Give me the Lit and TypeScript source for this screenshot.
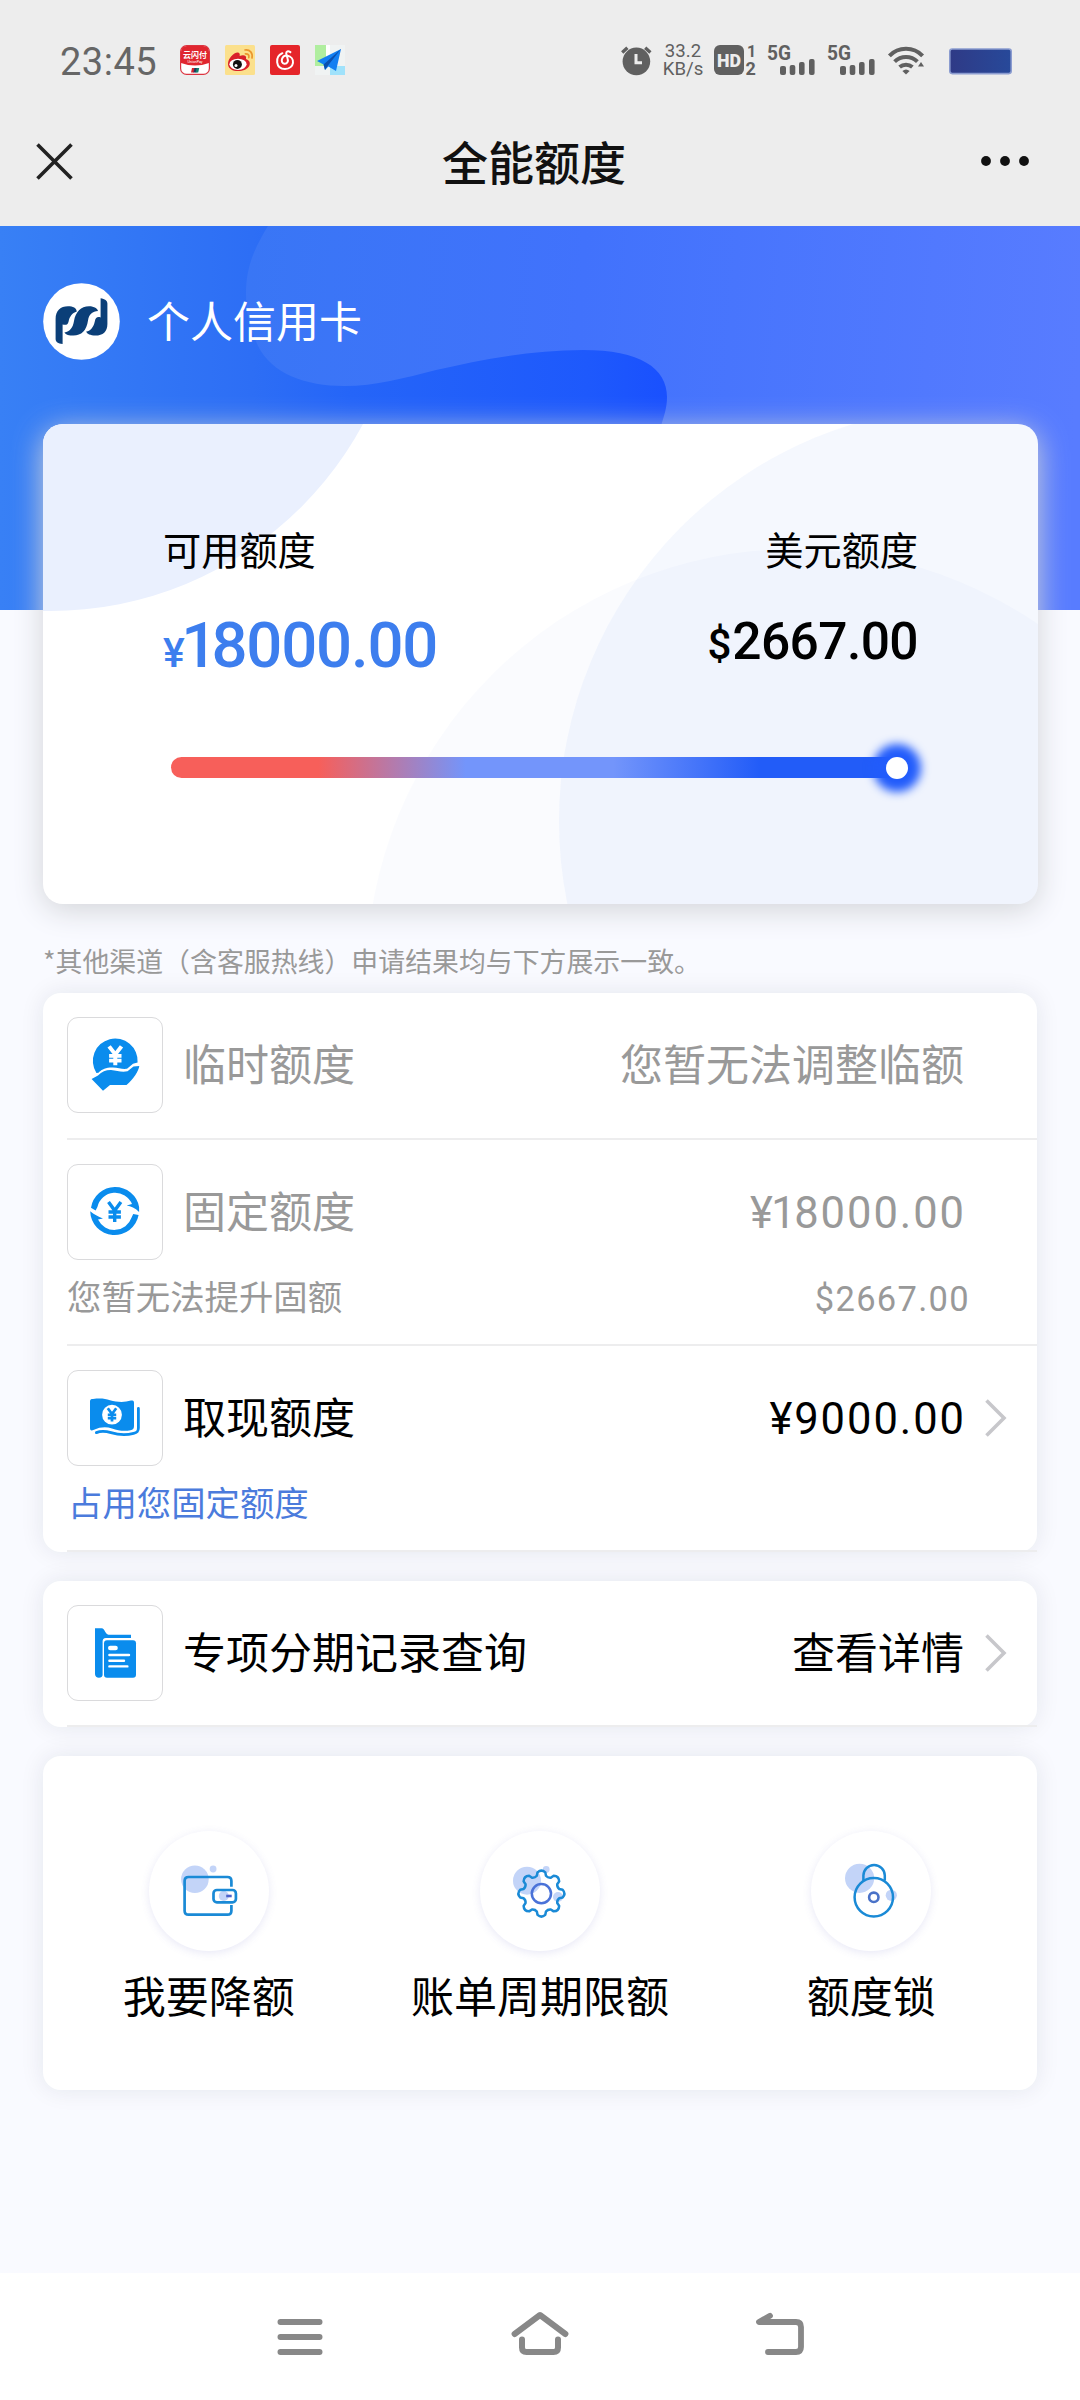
import { LitElement, html, css, svg, TemplateResult } from "lit";
import { customElement, property } from "lit/decorators.js";

const YEN = svg`<path d="M-6.2 -10 L0 -1.5 L6.2 -10 M0 -1.5 V10 M-6.2 0 H6.2 M-6.2 5 H6.2" fill="none" stroke="currentColor"/>`;

const gearPath = (cx: number, cy: number, outer: number, inner: number): string => {
  const teeth = 8;
  const pts: string[] = [];
  const at = (r: number, a: number) =>
    `${(cx + r * Math.cos(a)).toFixed(2)} ${(cy + r * Math.sin(a)).toFixed(2)}`;
  const step = (Math.PI * 2) / teeth;
  for (let i = 0; i < teeth; i++) {
    const a = i * step;
    pts.push(`${i ? "L" : "M"}${at(inner, a - step * 0.32)}`);
    pts.push(`L${at(outer - 1.6, a - step * 0.23)}`);
    pts.push(`Q${at(outer + 1.6, a)} ${at(outer - 1.6, a + step * 0.23)}`);
    pts.push(`L${at(inner, a + step * 0.32)}`);
    pts.push(`Q${at(inner - 1.6, a + step * 0.5)} ${at(inner, a + step * 0.68)}`);
  }
  return pts.join(" ") + "Z";
};

const icons: Record<string, TemplateResult> = {
  hand: svg`
    <path fill="#0a8ced" d="M29.4 56 A22.4 22.4 0 1 1 70.6 45.5 L66 46.8 L60 51.8 C54 52.6 50 49.6 43 50.6 C37 51.4 34 53.2 31.5 55.8 Z"/>
    <path fill="#0a8ced" d="M24.6 62 L31 58.4 C35 54.6 39 52.9 44 53 C50 53.4 54 55.6 60.5 54.3 L66.5 49.4 L72.3 49 C71.6 54 66.5 62 59.5 68 H43 L36 73.8 Z"/>
    <g transform="translate(48.3 38.8) scale(1 .95)" color="#fff" stroke-width="4">${YEN}</g>`,
  cycle: svg`
    <path fill="#0a8ced" d="M24 43.7 A24.4 24.4 0 0 1 72.1 43 V48 C68 44 64 42.6 59.6 41.6 L65 40 A18.2 18.2 0 0 0 30.4 43 L28.6 46.4 Z"/>
    <path fill="#0a8ced" d="M71.6 51 A24.4 24.4 0 0 1 23.2 47.2 C27 50.4 31 52.6 36 54.4 L31 55.6 A18.2 18.2 0 0 0 64.6 53.6 L66.2 50 Z"/>
    <g transform="translate(47.7 48)" color="#0a8ced" stroke-width="3.4">${YEN}</g>`,
  cash: svg`
    <path fill="#0a8ced" d="M23 31.5 C23 29.6 24 29 26 29 C34 28 38 28.8 43 30.2 C50 32.2 57 32.6 64 30.6 C66.4 30 67 30.8 67 33 V56 C67 58.6 66 59.8 63.4 60.2 C57 61.4 51 60.4 45 58.4 C39 56.6 33 57 27 59.8 C24 61 23 60.4 23 58 Z"/>
    <path fill="none" stroke="#0a8ced" stroke-width="2.8" stroke-linecap="round" d="M71.4 38.5 V58 C71.4 61.6 70 62.6 66.6 63.4 C58 65.6 50.5 64.6 44 62.6 C38 60.8 33.4 60.8 29.4 62.6"/>
    <circle cx="45" cy="44.7" r="9.9" fill="#fff"/>
    <g transform="translate(45 44.9) scale(.68 .66)" color="#0a8ced" stroke-width="4">${YEN}</g>`,
  file: svg`
    <path fill="#0a8ced" d="M28 23.3 H34.6 C38 23.4 38 29.5 41.5 29.7 H64 V33 H39 C36.4 33.2 35.6 34.4 35.6 36.6 V70 C35.6 71.6 34 72.7 32 72.7 C29.6 72.7 28 71.2 28 69 Z"/>
    <rect x="37" y="35.2" width="32" height="37.5" rx="3" fill="#0a8ced"/>
    <path stroke="#fff" fill="none" stroke-linecap="round" stroke-width="4.4" d="M43.2 43 H48.6"/>
    <path stroke="#fff" fill="none" stroke-linecap="round" stroke-width="2.4" d="M42.4 50 H62 M42.4 55.8 H57 M42.4 61.4 H60.4"/>`,
  wallet: svg`
    <circle cx="45.9" cy="48.3" r="13.8" fill="#c3d4f8"/>
    <circle cx="64.1" cy="38" r="3.4" fill="#c3d4f8"/>
    <path fill="none" stroke="#1a8ad6" stroke-width="2.7" d="M82.4 55.7 V50 Q82.4 46 78.4 46 H39.6 Q35.6 46 35.6 50 V79.7 Q35.6 83.7 39.6 83.7 H78.4 Q82.4 83.7 82.4 79.7 V74"/>
    <circle cx="74.8" cy="65" r="5" fill="#c3d4f8"/>
    <rect x="64.5" y="59" width="22.4" height="12.4" rx="3.4" fill="none" stroke="#1a8ad6" stroke-width="2.7"/>
    <path d="M77.2 65 H82.7" stroke="#4b62cc" stroke-width="2.6"/>`,
  gear: svg`
    <circle cx="47" cy="49.7" r="14" fill="#c3d4f8"/>
    <circle cx="66.2" cy="38.4" r="3.4" fill="#c3d4f8"/>
    <circle cx="78" cy="66" r="5" fill="#c3d4f8"/>
    <path d=${gearPath(61.4, 62.6, 23.2, 18.4)} fill="none" stroke="#1a8ad6" stroke-width="2.5" stroke-linejoin="round"/>
    <circle cx="61.4" cy="62.6" r="9.6" fill="none" stroke="#4a72d8" stroke-width="2.5"/>`,
  lock: svg`
    <circle cx="48.6" cy="47.3" r="14.6" fill="#c3d4f8"/>
    <circle cx="80.3" cy="64.3" r="5.6" fill="#c3d4f8"/>
    <path fill="none" stroke="#1a8ad6" stroke-width="2.5" d="M52.4 49.6 V44.6 A10.7 10.7 0 0 1 73.8 44.6 V49.6"/>
    <circle cx="62.8" cy="66.3" r="19.2" fill="none" stroke="#1a8ad6" stroke-width="2.5"/>
    <circle cx="62.8" cy="66.3" r="4.7" fill="none" stroke="#4a72c8" stroke-width="2.6"/>`,
};

@customElement("status-bar")
export class StatusBar extends LitElement {
  static styles = css`
    :host { display: flex; height: 96px; align-items: flex-start; padding: 45px 68px 0 60px; box-sizing: border-box; color: #606060; font-family: Roboto, sans-serif; }
    .time { font-size: 38px; line-height: 30px; width: 120px; color: #666; letter-spacing: .5px; padding-top: 2px; box-sizing: border-box; height: 30px; }
    .apps { display: flex; gap: 15px; }
    svg { display: block; overflow: visible; flex: none; }
    .sys { display: flex; margin-left: auto; }
    .net { display: flex; flex-direction: column; align-items: center; width: 38px; margin: -3px 12px 0 12px; font-size: 18.6px; line-height: 18px; white-space: nowrap; }
    .hd { margin-right: 10px; }
    .sig { margin-right: 9px; }
    .wifi { margin: 0 24px 0 1px; }
  `;
  private signal() {
    return svg`<text x="0" y="14.8" font-family="Roboto" font-weight="700" font-size="20.5" fill="#606060" textLength="24" lengthAdjust="spacingAndGlyphs">5G</text>
      <g fill="#606060"><rect x="13" y="21" width="6" height="9" rx="2"/><rect x="22.7" y="20" width="5.6" height="10" rx="2"/><rect x="32" y="17" width="5.6" height="13" rx="2"/><rect x="42" y="14" width="5.6" height="16" rx="2"/></g>`;
  }
  render() {
    return html`
      <div class="time">23:45</div>
      <div class="apps">
        <svg width="30" height="30" viewBox="0 0 30 30">
          <rect x=".6" y=".6" width="28.8" height="28.8" rx="6" fill="#fff" stroke="#dc3440" stroke-width="1.2"/>
          <path d="M1 18 V7 Q1 1 7 1 H23 Q29 1 29 7 V18 Q15 23 1 18Z" fill="#e0262f"/>
          <text x="15" y="13" font-size="8" font-family="Noto Sans CJK SC" font-weight="700" fill="#fff" text-anchor="middle">云闪付</text>
          <text x="15" y="18.2" font-size="3.6" font-family="Roboto" fill="#fff" text-anchor="middle">UnionPay</text>
          <path d="M12 23 h3 l-1 4.6 h-3z" fill="#d8232e"/><path d="M14.4 23 h3 l-1 4.6 h-3z" fill="#1b3a5e"/><path d="M16.6 23 h2.6 l-1 4.6 h-2.6z" fill="#12806e"/>
        </svg>
        <svg width="30" height="30" viewBox="0 0 30 30">
          <rect width="30" height="30" rx="1.5" fill="#fbe08c"/>
          <path d="M3 19 C3 13 9 7 13 7.4 C15 7.6 15 10 14.6 11 C18 9.6 22 10 21 14 C24 15 25.4 17 24.6 20 C23 25 16 26.6 11 26 C6 25.4 3 22.6 3 19Z" fill="#d9202a"/>
          <ellipse cx="13" cy="19.3" rx="8.6" ry="5.6" fill="#fff"/>
          <circle cx="12.4" cy="19.4" r="4.5" fill="#111"/><circle cx="11" cy="20.4" r="1.5" fill="#fff"/>
          <path d="M20 5 C25 4.4 28 8 27 13 M20.4 8.8 C23 8.6 24.4 10 23.8 12.6" fill="none" stroke="#eb962c" stroke-width="1.7" stroke-linecap="round"/>
        </svg>
        <svg width="30" height="30" viewBox="0 0 30 30">
          <rect width="30" height="30" rx="2" fill="#e5252a"/>
          <path d="M12.4 8.2 C4.6 11.6 5.4 24 15 24 C24.6 23.6 26 12.4 17 10.6 C11.6 10.4 9.8 18 14.4 18.8 C17.6 19 18.4 16 17.6 13.6 L16.2 8.6 C16 6.4 18 5.6 20.4 7.2" fill="none" stroke="#fff" stroke-width="2" stroke-linecap="round"/>
        </svg>
        <svg width="30" height="30" viewBox="0 0 30 30">
          <rect width="30" height="30" fill="#f0f3f3"/><rect width="11" height="21" fill="#b0ee9f"/><rect x="15" y="21" width="15" height="9" fill="#a0e2fb"/><path d="M11 0 H15 V21 H11Z" fill="#fff"/>
          <path d="M26 4 L2 16 L8.6 19.4 L10 25 L13.4 21.6 L21 26 Z" fill="#127ff2"/>
          <path d="M26 4 L8.6 19.4 L10 25 L13 20.6 Z" fill="#0b4fae"/>
        </svg>
      </div>
      <div class="sys">
        <svg width="31" height="30" viewBox="0 0 31 30">
          <circle cx="15.4" cy="16.4" r="13.8" fill="#606060"/>
          <path d="M1.2 7.4 L6.4 2.8 M29.4 7.4 L24.2 2.8" stroke="#606060" stroke-width="3.4"/>
          <path d="M15 9 V17.8 H21" fill="none" stroke="#ededed" stroke-width="3"/>
        </svg>
        <div class="net"><span>33.2</span><span>KB/s</span></div>
        <svg class="hd" width="43" height="30" viewBox="0 0 43 30">
          <rect width="30" height="30" rx="6" fill="#606060"/>
          <text x="15" y="22" text-anchor="middle" font-family="Roboto" font-weight="900" font-size="19" fill="#ededed" textLength="24" lengthAdjust="spacingAndGlyphs">HD</text>
          <text x="33" y="12.4" font-family="Roboto" font-weight="700" font-size="16" fill="#606060">1</text>
          <text x="31.6" y="30" font-family="Roboto" font-weight="700" font-size="18" fill="#606060">2</text>
        </svg>
        <svg width="51" height="30" viewBox="0 0 51 30" class="sig">${this.signal()}</svg>
        <svg width="51" height="30" viewBox="0 0 51 30" class="sig">${this.signal()}</svg>
        <svg class="wifi" width="37" height="30" viewBox="0 0 37 30">
          <g fill="none" stroke="#606060" stroke-width="4"><path d="M1.4 10.8 A23 23 0 0 1 34.6 10.8"/><path d="M6.6 16.6 A16.4 16.4 0 0 1 29.4 16.6"/><path d="M11.6 22 A10 10 0 0 1 24.4 22"/></g>
          <path d="M14.4 26 Q18 23 21.6 26 L18 29.6Z" fill="#606060"/><path d="M30 21.6 L33 17 L36 21.6Z" fill="#606060"/>
        </svg>
        <svg width="63" height="30" viewBox="0 0 63 30">
          <defs><linearGradient id="b"><stop stop-color="#2f3a86"/><stop offset="1" stop-color="#27499a"/></linearGradient></defs>
          <rect x=".8" y="4" width="61.4" height="24.6" rx="2.5" fill="url(#b)" stroke="#8b9cd0" stroke-width="1.6"/>
        </svg>
      </div>`;
  }
}

@customElement("limit-row")
export class LimitRow extends LitElement {
  @property() icon = "";
  @property() name = "";
  @property() value = "";
  @property() note = "";
  @property() noteValue = "";
  @property({ type: Boolean }) muted = false;
  @property({ type: Boolean }) arrow = false;
  @property({ type: Boolean }) numeric = false;
  static styles = css`
    :host { display: block; margin-left: 24px; padding-top: 24px; border-bottom: 2px solid #ededee; font-family: "Noto Sans CJK SC", sans-serif; color: #000; }
    .line { display: flex; align-items: center; height: 96px; padding: 0 73px 0 0; margin-bottom: 24px; }
    .line.arrow { padding-right: 29px; }
    .line.noted { margin-bottom: 0; }
    .box { width: 96px; height: 96px; box-sizing: border-box; border: 1px solid #dadadc; border-radius: 11px; margin-right: 20px; flex: none; }
    .box svg { display: block; margin: -1px; }
    .name, .value { font-size: 43px; line-height: 60px; padding-bottom: 7px; white-space: nowrap; }
    .value { margin-left: auto; }
    .numeric { font-family: Roboto, sans-serif; font-size: 43.5px; letter-spacing: 1.95px; margin-right: -2px; padding: 4px 0 0; }
    .tight { letter-spacing: -1.6px; }
    .muted { color: #999; }
    .chev { margin-left: 19px; display: block; }
    .note { display: flex; justify-content: space-between; height: 84px; font-size: 34.4px; line-height: 71px; color: #999; padding-right: 67px; }
    .note.link { color: #4b7bdc; padding-left: 1px; }
    .nv { font-family: Roboto, sans-serif; letter-spacing: 1.3px; line-height: 78px; font-size: 34.5px; }
  `;
  private amount(text: string) {
    // The figure one is narrow, so the pair before the next digit is set tighter.
    return text.startsWith("¥1") ? html`<span class="tight">¥1</span>${text.slice(2)}` : text;
  }
  render() {
    return html`
      <div class="line ${this.arrow ? "arrow" : ""} ${this.note ? "noted" : ""} ${this.muted ? "muted" : ""}">
        <div class="box"><svg width="96" height="96" viewBox="0 0 96 96">${icons[this.icon]}</svg></div>
        <span class="name">${this.name}</span>
        <span class="value ${this.numeric ? "numeric" : ""}">${this.amount(this.value)}</span>
        ${this.arrow
          ? html`<svg class="chev" width="25" height="42" viewBox="0 0 25 42"><path d="M3.5 3.5 L21 21 L3.5 38.5" fill="none" stroke="#c7c7cb" stroke-width="3.6"/></svg>`
          : ""}
      </div>
      ${this.note
        ? html`<div class="note ${this.muted ? "" : "link"}"><span>${this.note}</span><span class="nv">${this.noteValue}</span></div>`
        : ""}`;
  }
}

@customElement("app-root")
export class AppRoot extends LitElement {
  static styles = css`
    :host { display: block; width: 1080px; height: 2400px; background: #f9faff; font-family: "Noto Sans CJK SC", sans-serif; color: #000; overflow: hidden; }
    .page { display: flex; flex-direction: column; height: 2400px; }
    .top { background: #ededed; height: 226px; flex: none; }
    .nav { display: grid; grid-template-columns: 1fr auto 1fr; align-items: center; height: 130px; padding: 0 51px 0 34px; }
    .nav svg { display: block; }
    .nav .more { justify-self: end; }
    .title { font-size: 46px; line-height: 66px; font-weight: 500; color: #111; padding: 0 0 3px 5px; }
    .hero { position: relative; height: 384px; flex: none; }
    .wave { position: absolute; inset: 0; display: block; }
    .user { position: relative; display: flex; align-items: center; padding: 57px 0 0 43px; color: #fff; font-size: 43px; line-height: 60px; }
    .user svg { display: block; margin-right: 27px; }
    .user span { padding-bottom: 6px; }
    .card { position: relative; height: 480px; margin: -186px 42.5px 0 43px; flex: none; border-radius: 20px; background: #fff; box-shadow: 0 6px 30px #d2d4d8; }
    .shapes { position: absolute; inset: 0; display: block; border-radius: 20px; width: 100%; height: 100%; }
    .inner { position: relative; padding: 98px 119.5px 0 120px; }
    .amounts { display: flex; justify-content: space-between; }
    .amount { display: flex; flex-direction: column; }
    .amount.right { align-items: flex-end; }
    .label { font-size: 38.2px; line-height: 53px; height: 83px; }
    .money { font-family: Roboto, sans-serif; font-weight: 500; white-space: nowrap; height: 80px; line-height: 80px; }
    .blue { color: #3d7eee; font-size: 63.5px; letter-spacing: -1.2px; line-height: 82px; }
    .blue .one { letter-spacing: -6px; }
    .black { font-size: 51.5px; line-height: 74px; letter-spacing: -.6px; }
    .blue small { font-size: 41px; letter-spacing: -3.5px; }
    .black small { font-size: 42px; letter-spacing: 1px; }
    .track { display: flex; justify-content: flex-end; align-items: center; height: 21px; width: 737px; margin: 72px 0 0 8px; border-radius: 11px; background: linear-gradient(90deg, #f75f5a 20%, #7395fb 40%, #7395fb 60%, #225cf8 80%); }
    .knob { width: 22px; height: 22px; border-radius: 50%; background: #fff; box-shadow: 0 0 10px 13px #225cfb; flex: none; }
    .tip { font-size: 26.9px; line-height: 40px; color: #999; margin: 0; padding: 37px 0 0 43px; height: 89px; box-sizing: border-box; flex: none; }
    .panel { background: #fff; border-radius: 18px; margin: 0 43px 29px; flex: none; box-shadow: 0 0 24px rgba(20, 30, 50, .09); }
    .panel limit-row.first { padding-bottom: 1px; }
    .actions { display: grid; grid-template-columns: repeat(3, 1fr); height: 334px; box-sizing: border-box; padding-top: 75px; }
    .action { display: flex; flex-direction: column; align-items: center; font-size: 43px; line-height: 60px; white-space: nowrap; }
    .disc { width: 120px; height: 120px; border-radius: 50%; box-shadow: 0 2px 8px rgba(90, 90, 190, .14); margin-bottom: 13px; }
    .disc svg { display: block; }
    .sysnav { display: flex; justify-content: center; align-items: flex-start; gap: 180px; background: #fff; height: 127px; margin-top: auto; flex: none; padding-top: 34px; box-sizing: border-box; }
    .sysnav svg { display: block; }
  `;

  render() {
    return html`
      <div class="page">
        <header class="top">
          <status-bar></status-bar>
          <div class="nav">
            <svg width="41" height="41" viewBox="0 0 41 41"><path d="M3.5 3.5 L37.5 37.5 M37.5 3.5 L3.5 37.5" stroke="#222" stroke-width="3.6"/></svg>
            <div class="title">全能额度</div>
            <svg class="more" width="48" height="10" viewBox="0 0 48 10" fill="#111"><circle cx="5" cy="5" r="4.9"/><circle cx="24" cy="5" r="4.9"/><circle cx="43" cy="5" r="4.9"/></svg>
          </div>
        </header>

        <section class="hero">
          <svg class="wave" width="1080" height="384" viewBox="0 226 1080 384">
            <defs>
              <linearGradient id="base" gradientUnits="userSpaceOnUse" x1="0" y1="350" x2="700" y2="350">
                <stop stop-color="#3880f5"/><stop offset=".36" stop-color="#2d6ef5"/><stop offset=".5" stop-color="#2565f8"/><stop offset=".84" stop-color="#1e59fc"/><stop offset="1" stop-color="#184dff"/>
              </linearGradient>
              <linearGradient id="over" gradientUnits="userSpaceOnUse" x1="245" y1="300" x2="1080" y2="360">
                <stop stop-color="#3976f5"/><stop offset=".4" stop-color="#4172fc"/><stop offset="1" stop-color="#587cff"/>
              </linearGradient>
            </defs>
            <rect y="226" width="1080" height="384" fill="url(#base)"/>
            <path fill="url(#over)" d="M268 226 C252 252 246 270 246 294 C246 318 252 332 258 346 C272 374 306 386 344 386 C376 386 404 378 436 370 C480 360 530 350 583 350 C640 350 667 368 667 397 C667 408 664 416 661 426 L600 610 H1080 V226 Z"/>
          </svg>
          <div class="user">
            <svg width="77" height="77" viewBox="0 0 77 77">
              <circle cx="38.5" cy="38.5" r="38.3" fill="#fff"/>
              <g fill="#0b3f78">
                <path d="M12.6 56 V36 C12.6 27.5 17.5 23.2 25 23.2 C30 23.2 33.6 25 33.8 28.6 C29 30 26.6 34 25.6 38.4 C24.6 42.4 22.4 42 19.6 41.4 V61 C15 60.4 12.6 59 12.6 56 Z"/>
                <path d="M21.4 49.4 C27 48.6 30 44.6 31 38 C32.4 29 38 23.2 46 23.2 C51.4 23.2 54.6 25.6 55 28 C49.6 28.4 46 31 45 37.6 C43.6 47.6 38.4 52.6 30.4 52.6 C26 52.6 22.8 51.6 21.4 49.4 Z"/>
                <path d="M64.4 20.6 V41 C64.4 48.6 60 52.6 52.4 52.6 C47.4 52.6 43.8 51 43.2 48.6 C48 47.4 50.6 44 51.8 38.4 C52.6 34.4 54.4 33.6 57.6 34.4 V15.2 C61.8 15.8 64.4 17.4 64.4 20.6 Z"/>
              </g>
            </svg>
            <span>个人信用卡</span>
          </div>
        </section>

        <section class="card">
          <svg class="shapes" viewBox="43 424 994.5 480">
            <circle cx="50" cy="255.5" r="355.5" fill="#eaf0fe"/>
            <circle cx="974" cy="821" r="415" fill="rgba(60,110,240,.05)"/>
            <circle cx="795.4" cy="978" r="429" fill="rgba(90,130,230,.03)"/>
          </svg>
          <div class="inner">
            <div class="amounts">
              <div class="amount">
                <span class="label">可用额度</span>
                <span class="money blue"><small>¥</small><span class="one">1</span>8000.00</span>
              </div>
              <div class="amount right">
                <span class="label">美元额度</span>
                <span class="money black"><small>$</small>2667.00</span>
              </div>
            </div>
            <div class="track"><div class="knob"></div></div>
          </div>
        </section>

        <p class="tip">*其他渠道（含客服热线）申请结果均与下方展示一致。</p>

        <section class="panel">
          <limit-row class="first" icon="hand" name="临时额度" value="您暂无法调整临额" muted></limit-row>
          <limit-row icon="cycle" name="固定额度" value="¥18000.00" note="您暂无法提升固额" .noteValue=${"$2667.00"} muted numeric></limit-row>
          <limit-row icon="cash" name="取现额度" value="¥9000.00" note="占用您固定额度" arrow numeric></limit-row>
        </section>
        <section class="panel">
          <limit-row icon="file" name="专项分期记录查询" value="查看详情" arrow></limit-row>
        </section>
        <section class="panel actions">
          ${[["wallet", "我要降额"], ["gear", "账单周期限额"], ["lock", "额度锁"]].map(
            ([icon, text]) => html`<div class="action">
              <div class="disc"><svg width="120" height="120" viewBox="0 0 120 120">${icons[icon]}</svg></div>
              <span>${text}</span>
            </div>`
          )}
        </section>

        <footer class="sysnav">
          <svg width="60" height="60" viewBox="0 0 60 60"><path d="M10.5 15 H49.5 M10.5 30 H49.5 M10.5 45 H49.5" stroke="#888" stroke-width="6" stroke-linecap="round"/></svg>
          <svg width="60" height="60" viewBox="0 0 60 60" fill="none" stroke="#888" stroke-width="6" stroke-linecap="round" stroke-linejoin="round"><path d="M4.6 27 L30 8 L55.4 27"/><path d="M12 32.4 V40.5 Q12 45 16.5 45 H43.5 Q48 45 48 40.5 V32.4"/></svg>
          <svg width="60" height="60" viewBox="0 0 60 60" fill="none" stroke="#888" stroke-width="5.8" stroke-linecap="round" stroke-linejoin="round"><path d="M20 8.8 L9 15 H46 Q51 15 51 20 V40 Q51 45 46 45 H18"/></svg>
        </footer>
      </div>`;
  }
}
